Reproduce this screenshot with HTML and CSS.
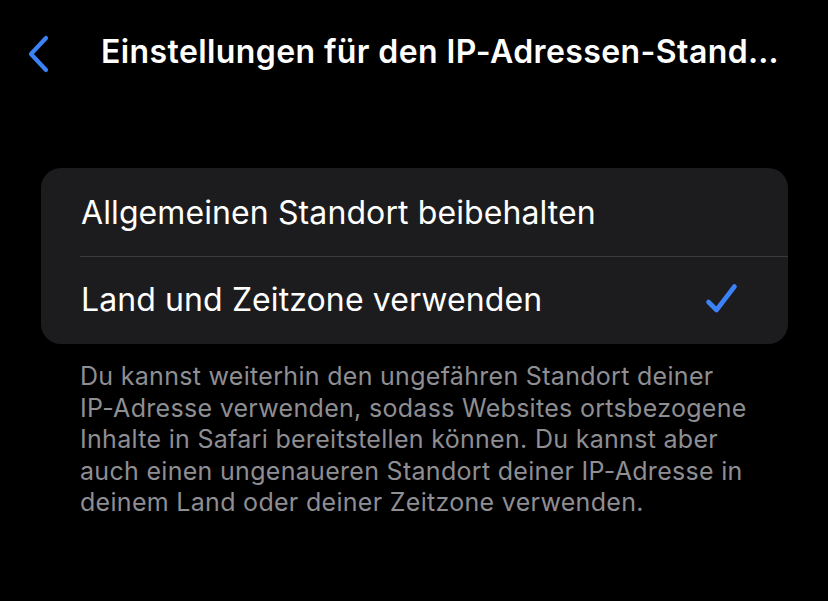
FILE: index.html
```html
<!DOCTYPE html>
<html lang="de">
<head>
<meta charset="utf-8">
<link rel="stylesheet" href="styles.css">
</head>
<body>
<div class="screen">
  <header class="navbar">
    <span class="back" aria-label="Zurück">
      <svg width="22" height="38" viewBox="0 0 22 38"><path d="M19 3 L4 19 L19 35" fill="none" stroke="#3b82f6" stroke-width="4.2" stroke-linecap="round" stroke-linejoin="round"/></svg>
    </span>
    <h1 class="title">Einstellungen für den IP-Adressen-Stand…</h1>
  </header>
  <section class="group">
    <div class="row">
      <span class="label">Allgemeinen Standort beibehalten</span>
    </div>
    <div class="row">
      <span class="label">Land und Zeitzone verwenden</span>
      <svg class="check" width="34" height="34" viewBox="0 0 34 34"><path d="M3.5 19 L11.5 27 L29.5 3.5" fill="none" stroke="#3b82f6" stroke-width="4.6" stroke-linecap="round" stroke-linejoin="round"/></svg>
    </div>
  </section>
  <p class="footer">Du kannst weiterhin den ungefähren Standort deiner<br>IP-Adresse verwenden, sodass Websites ortsbezogene<br>Inhalte in Safari bereitstellen können. Du kannst aber<br>auch einen ungenaueren Standort deiner IP-Adresse in<br>deinem Land oder deiner Zeitzone verwenden.</p>
</div>
</body>
</html>
```

FILE: styles.css
```css
html, body {
  margin: 0;
  padding: 0;
  background: #000;
}
body {
  font-family: Inter, "Noto Sans", sans-serif;
  color: #fff;
  -webkit-font-smoothing: antialiased;
}
.screen {
  width: 828px;
  height: 601px;
  overflow: hidden;
  background: #000;
}
.navbar {
  display: flex;
  align-items: center;
  padding: 16px 0 0 27px;
  box-sizing: border-box;
  height: 90px;
}
.back {
  display: flex;
  width: 22px;
  height: 38px;
  margin-top: 2px;
}
.title {
  margin: -3px 0 0 52px;
  font-size: 32px;
  font-weight: 600;
  white-space: nowrap;
  letter-spacing: 0.4px;
}
.group {
  margin: 78px 40px 0 41px;
  background: #1c1c1e;
  border-radius: 20px;
  overflow: hidden;
}
.row {
  height: 88px;
  display: flex;
  align-items: center;
  justify-content: space-between;
  padding: 0 49px 0 40px;
  position: relative;
}
.row + .row::before {
  content: "";
  position: absolute;
  left: 39px;
  right: 0;
  top: 0;
  height: 1px;
  background: #3a3a3c;
}
.label {
  font-size: 32px;
  font-weight: 400;
  letter-spacing: 0.1px;
}
.row + .row .label {
  margin-top: -2px;
}
.check {
  display: block;
}
.footer {
  margin: 17px 0 0 80px;
  font-size: 25px;
  line-height: 31.6px;
  color: #8e8e93;
  letter-spacing: 0.3px;
}
```
